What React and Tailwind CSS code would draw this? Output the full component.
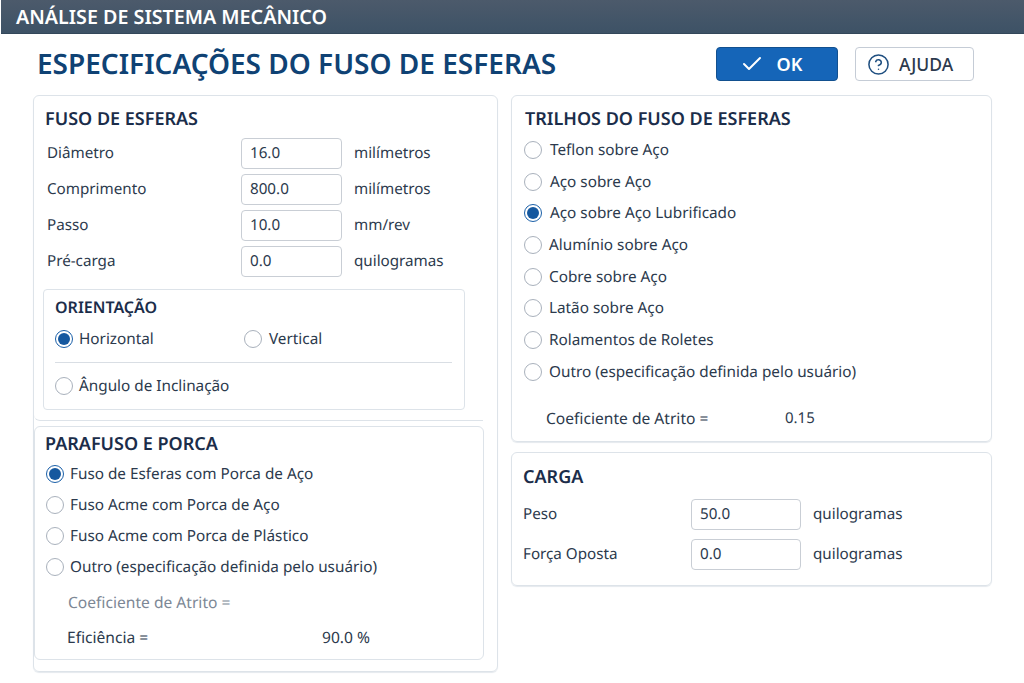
import React from 'react';
import { Check, CircleHelp } from 'lucide-react';

function Radio({ checked, label, className = '', labelClass = 'ml-[6px]' }) {
  return (
    <div className={`flex items-center ${className}`}>
      {checked ? (
        <span className="w-[18px] h-[18px] rounded-full border-[1.5px] border-[#1a5fa8] bg-white flex items-center justify-center shrink-0">
          <span className="w-[12px] h-[12px] rounded-full bg-[#15589f]" />
        </span>
      ) : (
        <span className="w-[18px] h-[18px] rounded-full border-[1.5px] border-[#a9b1bc] bg-white shrink-0" />
      )}
      {label && <span className={`text-[15.3px] leading-[20px] text-[#2c3a4d] whitespace-nowrap ${labelClass}`}>{label}</span>}
    </div>
  );
}

function Field({ label, value, unit, labelW, inputW }) {
  return (
    <div className="flex items-center h-[32px]">
      <span className={`pt-[1px] text-[15.2px] text-[#2c3a4d] shrink-0 ${labelW}`}>{label}</span>
      <div className={`h-[31px] rounded-[4px] border-[1.5px] border-[#c9ced5] bg-white flex items-center pl-[8px] text-[15.2px] text-[#2c3a4d] shrink-0 ${inputW}`}>{value}</div>
      <span className="ml-[12px] pt-[1px] text-[15.2px] text-[#2c3a4d]">{unit}</span>
    </div>
  );
}

export default function App() {
  return (
    <div className="w-[1024px] h-[683px] bg-white overflow-hidden font-['Noto_Sans','Open_Sans',sans-serif] [text-rendering:geometricPrecision]">
      {/* Title bar */}
      <div className="h-[34px] ml-[1px] pl-[15px] flex items-center bg-gradient-to-b from-[#4c5a6b] to-[#3d5266] border-b border-[#33475a]">
        <span className="text-[19.7px] font-semibold text-white">ANÁLISE DE SISTEMA MECÂNICO</span>
      </div>

      {/* Heading */}
      <div className="h-[61px] pl-[37px] flex items-start">
        <h1 className="w-[679px] mt-[12px] text-[28px] leading-[36px] font-semibold text-[#0f4274] whitespace-nowrap">ESPECIFICAÇÕES DO FUSO DE ESFERAS</h1>
        <button className="mt-[13px] w-[122px] h-[34px] pr-[12px] rounded-[4px] bg-[#1565b8] border border-[#12508f] flex items-center justify-center gap-[13px] text-white text-[18px] font-semibold">
          <Check className="w-[24px] h-[24px]" strokeWidth={2} />
          OK
        </button>
        <button className="mt-[13px] ml-[17px] w-[119px] h-[34px] pr-[9px] rounded-[4px] bg-white border-[1.5px] border-[#c5ccd6] flex items-center justify-center gap-[9px] text-[#2c3a4d] text-[17.5px] font-medium">
          <CircleHelp className="w-[23px] h-[23px] text-[#1f4f80]" strokeWidth={1.6} />
          AJUDA
        </button>
      </div>

      <div className="flex pl-[33px] items-start">
        {/* Left column */}
        <div className="w-[465px] h-[577px] rounded-[6px] border-[1.5px] border-[#dde3e9] shadow-[0_1px_1px_#e5e9ee]">
          <div className="w-[449px] h-[325px] border-b-[1.5px] border-[#dde3e9] rounded-bl-[6px] pt-[11px]">
            <h2 className="ml-[11px] text-[18px] leading-[24px] font-semibold text-[#1b2d4a]">FUSO DE ESFERAS</h2>
            <div className="ml-[13px] mt-[6px] flex flex-col gap-[4px]">
              <Field label="Diâmetro" value="16.0" unit="milímetros" labelW="w-[194px]" inputW="w-[101px]" />
              <Field label="Comprimento" value="800.0" unit="milímetros" labelW="w-[194px]" inputW="w-[101px]" />
              <Field label="Passo" value="10.0" unit="mm/rev" labelW="w-[194px]" inputW="w-[101px]" />
              <Field label="Pré-carga" value="0.0" unit="quilogramas" labelW="w-[194px]" inputW="w-[101px]" />
            </div>
            <div className="ml-[9px] mt-[12px] w-[422px] h-[121px] rounded-[4px] border-[1.5px] border-[#dde3e9] pt-[6px] px-[11px]">
              <h3 className="text-[16px] leading-[22px] font-semibold text-[#1b2d4a]">ORIENTAÇÃO</h3>
              <div className="flex mt-[11px]">
                <Radio checked label="Horizontal" className="w-[189px]" />
                <Radio label="Vertical" labelClass="ml-[7px]" />
              </div>
              <div className="mt-[13px] h-px bg-[#d9dee4] w-[397px]" />
              <Radio label="Ângulo de Inclinação" className="mt-[13px]" />
            </div>
          </div>
          <div className="mt-[5px] w-[450px] h-[234px] rounded-[6px] border-[1.5px] border-[#dde3e9] pt-[5px]">
            <h2 className="ml-[10px] text-[18px] leading-[24px] font-semibold text-[#1b2d4a]">PARAFUSO E PORCA</h2>
            <div className="ml-[11px] mt-[8px] flex flex-col gap-[11px]">
              <Radio checked label="Fuso de Esferas com Porca de Aço" />
              <Radio label="Fuso Acme com Porca de Aço" />
              <Radio label="Fuso Acme com Porca de Plástico" />
              <Radio label="Outro (especificação definida pelo usuário)" />
            </div>
            <div className="ml-[33px] mt-[15px] text-[15.6px] leading-[20px] text-[#7d8896]">Coeficiente de Atrito =</div>
            <div className="flex ml-[32px] mt-[15px] text-[15.6px] leading-[20px] text-[#2c3a4d]">
              <span className="w-[255px]">Eficiência =</span>
              <span>90.0 %</span>
            </div>
          </div>
        </div>

        {/* Right column */}
        <div className="ml-[13px] w-[481px] flex flex-col gap-[10px]">
          <div className="h-[347px] rounded-[6px] border-[1.5px] border-[#dde3e9] shadow-[0_1px_1px_#e5e9ee] pt-[11px] pl-[12px]">
            <h2 className="text-[18px] leading-[24px] font-semibold text-[#1b2d4a] ml-[1px]">TRILHOS DO FUSO DE ESFERAS</h2>
            <div className="mt-[9px] flex flex-col gap-[11.7px]">
              <Radio label="Teflon sobre Aço" labelClass="ml-[8px]" />
              <Radio label="Aço sobre Aço" labelClass="ml-[8px]" />
              <Radio checked label="Aço sobre Aço Lubrificado" labelClass="ml-[8px]" />
              <Radio label="Alumínio sobre Aço" labelClass="ml-[7px]" />
              <Radio label="Cobre sobre Aço" labelClass="ml-[7px]" />
              <Radio label="Latão sobre Aço" labelClass="ml-[7px]" />
              <Radio label="Rolamentos de Roletes" labelClass="ml-[7px]" />
              <Radio label="Outro (especificação definida pelo usuário)" labelClass="ml-[7px]" />
            </div>
            <div className="flex ml-[22px] mt-[26px] text-[15.6px] leading-[20px] text-[#2c3a4d]">
              <span className="w-[239px]">Coeficiente de Atrito =</span>
              <span className="text-[15px]">0.15</span>
            </div>
          </div>
          <div className="h-[134px] rounded-[6px] border-[1.5px] border-[#dde3e9] shadow-[0_1px_1px_#e5e9ee] pt-[12px] pl-[11px]">
            <h2 className="text-[18px] leading-[24px] font-semibold text-[#1b2d4a]">CARGA</h2>
            <div className="mt-[9px] flex flex-col gap-[8px]">
              <Field label="Peso" value="50.0" unit="quilogramas" labelW="w-[168px]" inputW="w-[110px]" />
              <Field label="Força Oposta" value="0.0" unit="quilogramas" labelW="w-[168px]" inputW="w-[110px]" />
            </div>
          </div>
        </div>
      </div>
    </div>
  );
}
